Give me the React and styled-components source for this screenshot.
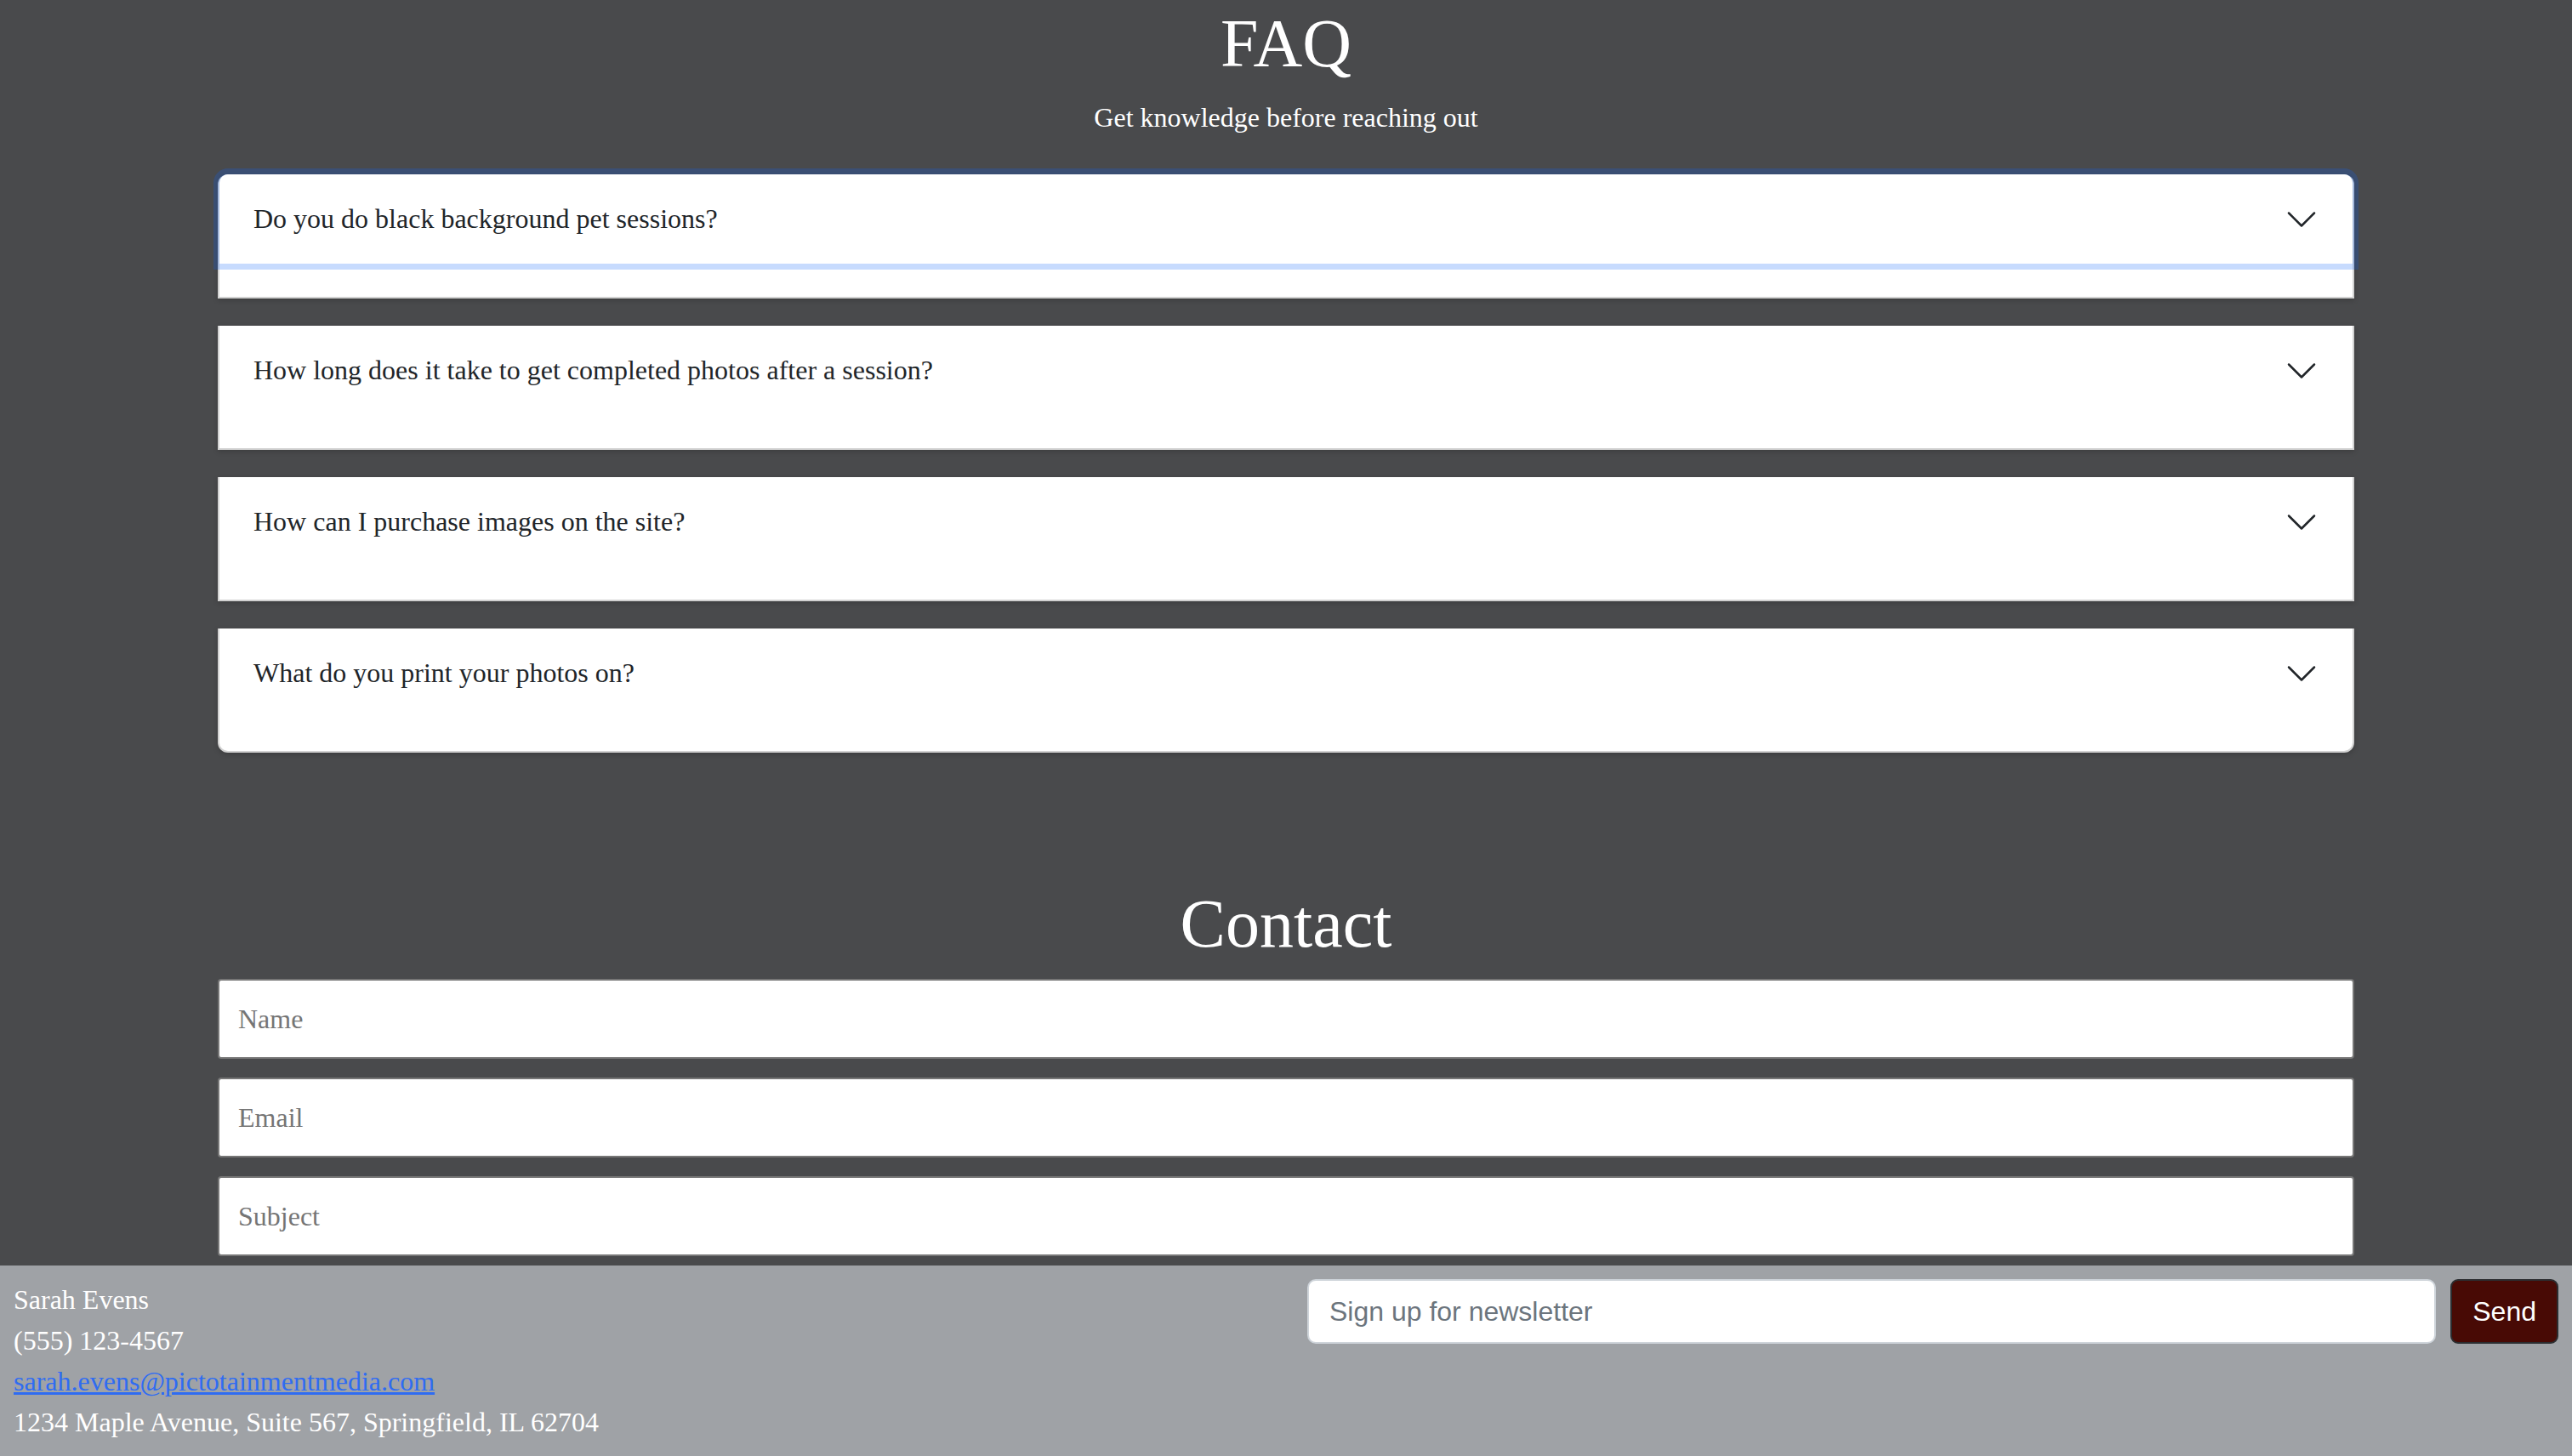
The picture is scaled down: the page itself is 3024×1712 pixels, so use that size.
import React from "react";
import styled, { createGlobalStyle } from "styled-components";

const Global = createGlobalStyle`
  html, body { margin: 0; padding: 0; }
  body {
    background: #494a4c;
    font-family: "Liberation Serif", "Times New Roman", serif;
    color: #ffffff;
  }
  * { box-sizing: border-box; }
`;

const Page = styled.div`
  height: 100vh;
  display: flex;
  flex-direction: column;
`;

const Main = styled.main`
  flex: 1;
  overflow: hidden;
  padding-top: 3px;
`;

const Container = styled.div`
  width: 2512px;
  margin: 0 auto;
`;

const Title = styled.h1`
  margin: ${(p) => p.$mt || 0}px 0 0;
  font-size: 80px;
  line-height: 96px;
  font-weight: 400;
  text-align: center;
  color: #ffffff;
`;

const Subtitle = styled.p`
  margin: 15px 0 0;
  font-size: 32px;
  line-height: 48px;
  text-align: center;
  color: #ffffff;
`;

const Accordion = styled.div`
  margin-top: 43px;
  display: flex;
  flex-direction: column;
  gap: 32px;
`;

const Item = styled.div`
  height: 146px;
  background: #ffffff;
  border: 2px solid rgba(0, 0, 0, 0.175);
  border-top: none;
  border-radius: ${(p) => (p.$first ? "12px 12px 0 0" : p.$last ? "0 0 12px 12px" : "0")};
  box-shadow: 0 2px 6px rgba(0, 0, 0, 0.18);
`;

const Header = styled.button`
  position: relative;
  z-index: ${(p) => (p.$focused ? 3 : 1)};
  width: 100%;
  height: 105px;
  display: flex;
  align-items: center;
  justify-content: space-between;
  padding: 0 40px;
  border: none;
  background: #ffffff;
  font-family: "Liberation Serif", "Times New Roman", serif;
  font-size: 32px;
  color: #212529;
  text-align: left;
  border-radius: ${(p) => (p.$focused ? "10px 10px 0 0" : "0")};
  box-shadow: ${(p) => (p.$focused ? "0 0 0 7px rgba(13, 100, 250, 0.23)" : "none")};
  cursor: pointer;
`;

const Chevron = styled.svg`
  width: 40px;
  height: 40px;
  flex-shrink: 0;
`;

const Form = styled.form`
  margin-top: 17px;
  display: flex;
  flex-direction: column;
  gap: 22px;
`;

const Field = styled.input`
  height: 94px;
  width: 100%;
  padding: 0 22px;
  border: 2px solid #767676;
  border-radius: 4px;
  background: #ffffff;
  font-family: "Liberation Serif", "Times New Roman", serif;
  font-size: 32px;
  color: #212529;
  &::placeholder { color: #757575; }
`;

const Footer = styled.footer`
  height: 224px;
  flex-shrink: 0;
  background: #9fa2a6;
  padding: 16px;
  display: grid;
  grid-template-columns: 1fr 1fr;
  column-gap: 50px;
`;

const Info = styled.div`
  display: flex;
  flex-direction: column;
`;

const Line = styled.div`
  font-size: 32px;
  line-height: 48px;
  color: #ffffff;
`;

const Mail = styled.a`
  font-size: 32px;
  line-height: 48px;
  color: #2f6cf2;
  text-decoration: underline;
`;

const Newsletter = styled.form`
  display: flex;
  align-items: flex-start;
  gap: 17px;
`;

const NewsInput = styled.input`
  flex: 1;
  height: 76px;
  padding: 0 24px;
  border: 2px solid #ced4da;
  border-radius: 10px;
  background: #ffffff;
  font-family: "Liberation Sans", Arial, sans-serif;
  font-size: 32px;
  color: #212529;
  &::placeholder { color: #6c757d; }
`;

const SendButton = styled.button`
  height: 76px;
  padding: 0 24px;
  border: 2px solid #2b2d30;
  border-radius: 9px;
  background: #480a05;
  color: #ffffff;
  font-family: "Liberation Sans", Arial, sans-serif;
  font-size: 32px;
  cursor: pointer;
`;

const questions = [
  "Do you do black background pet sessions?",
  "How long does it take to get completed photos after a session?",
  "How can I purchase images on the site?",
  "What do you print your photos on?",
];

function ChevronIcon() {
  return (
    <Chevron viewBox="0 0 16 16" fill="none" stroke="#212529" strokeLinecap="round" strokeLinejoin="round">
      <path d="M2 5L8 11L14 5" />
    </Chevron>
  );
}

export default function App() {
  return (
    <>
      <Global />
      <Page>
        <Main>
          <Container>
            <Title>FAQ</Title>
            <Subtitle>Get knowledge before reaching out</Subtitle>
            <Accordion>
              {questions.map((q, i) => (
                <Item key={q} $first={i === 0} $last={i === questions.length - 1}>
                  <Header type="button" $focused={i === 0}>
                    <span>{q}</span>
                    <ChevronIcon />
                  </Header>
                </Item>
              ))}
            </Accordion>
            <Title $mt={153}>Contact</Title>
            <Form onSubmit={(e) => e.preventDefault()}>
              <Field type="text" placeholder="Name" />
              <Field type="email" placeholder="Email" />
              <Field type="text" placeholder="Subject" />
            </Form>
          </Container>
        </Main>
        <Footer>
          <Info>
            <Line>Sarah Evens</Line>
            <Line>(555) 123-4567</Line>
            <div>
              <Mail href="#">sarah.evens@pictotainmentmedia.com</Mail>
            </div>
            <Line>1234 Maple Avenue, Suite 567, Springfield, IL 62704</Line>
          </Info>
          <Newsletter onSubmit={(e) => e.preventDefault()}>
            <NewsInput type="email" placeholder="Sign up for newsletter" />
            <SendButton type="submit">Send</SendButton>
          </Newsletter>
        </Footer>
      </Page>
    </>
  );
}
